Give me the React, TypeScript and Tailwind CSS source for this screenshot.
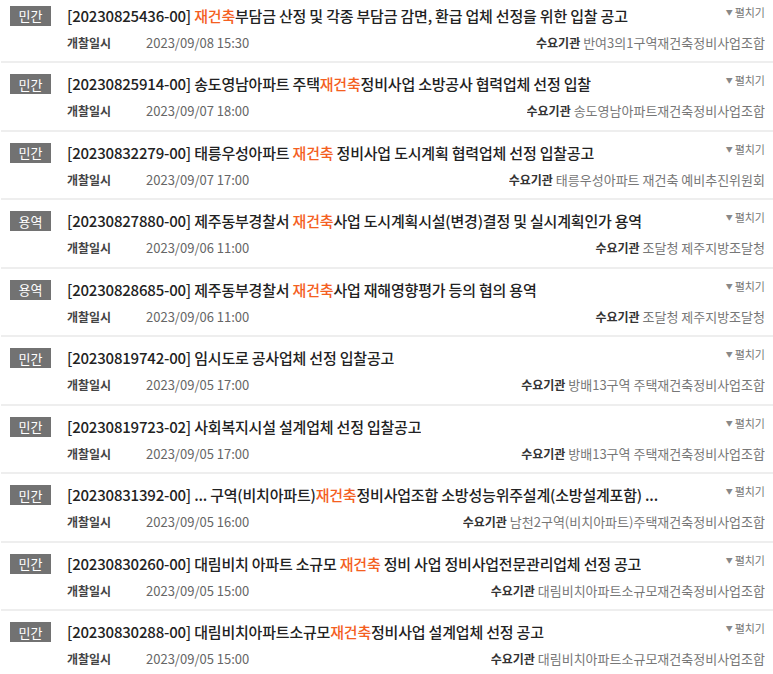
type Bid = {
  kind: string
  no: string
  before: string
  hl?: string
  after?: string
  date: string
  org: string
}

const bids: Bid[] = [
  { kind: "민간", no: "20230825436-00", before: "", hl: "재건축", after: "부담금 산정 및 각종 부담금 감면, 환급 업체 선정을 위한 입찰 공고", date: "2023/09/08 15:30", org: "반여3의1구역재건축정비사업조합" },
  { kind: "민간", no: "20230825914-00", before: "송도영남아파트 주택", hl: "재건축", after: "정비사업 소방공사 협력업체 선정 입찰", date: "2023/09/07 18:00", org: "송도영남아파트재건축정비사업조합" },
  { kind: "민간", no: "20230832279-00", before: "태릉우성아파트 ", hl: "재건축", after: " 정비사업 도시계획 협력업체 선정 입찰공고", date: "2023/09/07 17:00", org: "태릉우성아파트 재건축 예비추진위원회" },
  { kind: "용역", no: "20230827880-00", before: "제주동부경찰서 ", hl: "재건축", after: "사업 도시계획시설(변경)결정 및 실시계획인가 용역", date: "2023/09/06 11:00", org: "조달청 제주지방조달청" },
  { kind: "용역", no: "20230828685-00", before: "제주동부경찰서 ", hl: "재건축", after: "사업 재해영향평가 등의 협의 용역", date: "2023/09/06 11:00", org: "조달청 제주지방조달청" },
  { kind: "민간", no: "20230819742-00", before: "임시도로 공사업체 선정 입찰공고", date: "2023/09/05 17:00", org: "방배13구역 주택재건축정비사업조합" },
  { kind: "민간", no: "20230819723-02", before: "사회복지시설 설계업체 선정 입찰공고", date: "2023/09/05 17:00", org: "방배13구역 주택재건축정비사업조합" },
  { kind: "민간", no: "20230831392-00", before: "... 구역(비치아파트)", hl: "재건축", after: "정비사업조합 소방성능위주설계(소방설계포함) ...", date: "2023/09/05 16:00", org: "남천2구역(비치아파트)주택재건축정비사업조합" },
  { kind: "민간", no: "20230830260-00", before: "대림비치 아파트 소규모 ", hl: "재건축", after: " 정비 사업 정비사업전문관리업체 선정 공고", date: "2023/09/05 15:00", org: "대림비치아파트소규모재건축정비사업조합" },
  { kind: "민간", no: "20230830288-00", before: "대림비치아파트소규모", hl: "재건축", after: "정비사업 설계업체 선정 공고", date: "2023/09/05 15:00", org: "대림비치아파트소규모재건축정비사업조합" },
]

function BidRow({ bid }: { bid: Bid }) {
  return (
    <li className="flex h-[68.5px] border-b-2 border-[#eeeeee] pl-[9px] pr-[8px]">
      <span className="mt-[11px] flex h-[20px] w-[41px] shrink-0 items-center justify-center bg-[#727272] text-[13px] leading-none text-white">
        {bid.kind}
      </span>
      <div className="ml-[16px] flex min-w-0 flex-1 flex-col">
        <div className="mt-[10px] flex items-start justify-between">
          <p className="truncate text-[15px] font-medium leading-[21px] tracking-[-0.2px] text-[#222]">
            [{bid.no}] {bid.before}
            {bid.hl && <span className="text-[#f4601f]">{bid.hl}</span>}
            {bid.after}
          </p>
          <button className="ml-4 mt-[-2px] flex shrink-0 items-center gap-[2px] text-[11px] leading-[18px] text-[#777]">
            <span className="text-[7px] text-[#888]">▼</span>
            펼치기
          </button>
        </div>
        <div className="mt-[7px] flex items-center justify-between text-[13px] leading-[20px]">
          <div className="flex items-center">
            <span className="w-[79px] text-[12px] font-semibold text-[#444]">개찰일시</span>
            <span className="text-[#666]">{bid.date}</span>
          </div>
          <div className="truncate">
            <span className="text-[12px] font-semibold text-[#333]">수요기관</span>{" "}
            <span className="text-[#777]">{bid.org}</span>
          </div>
        </div>
      </div>
    </li>
  )
}

export default function App() {
  return (
    <div className="h-[674px] w-[773px] overflow-hidden bg-white font-['Noto_Sans_CJK_KR','Noto_Sans',sans-serif]">
      <ul className="-mt-[5.5px] ml-[1px]">
        {bids.map((bid) => (
          <BidRow key={bid.no} bid={bid} />
        ))}
      </ul>
    </div>
  )
}
